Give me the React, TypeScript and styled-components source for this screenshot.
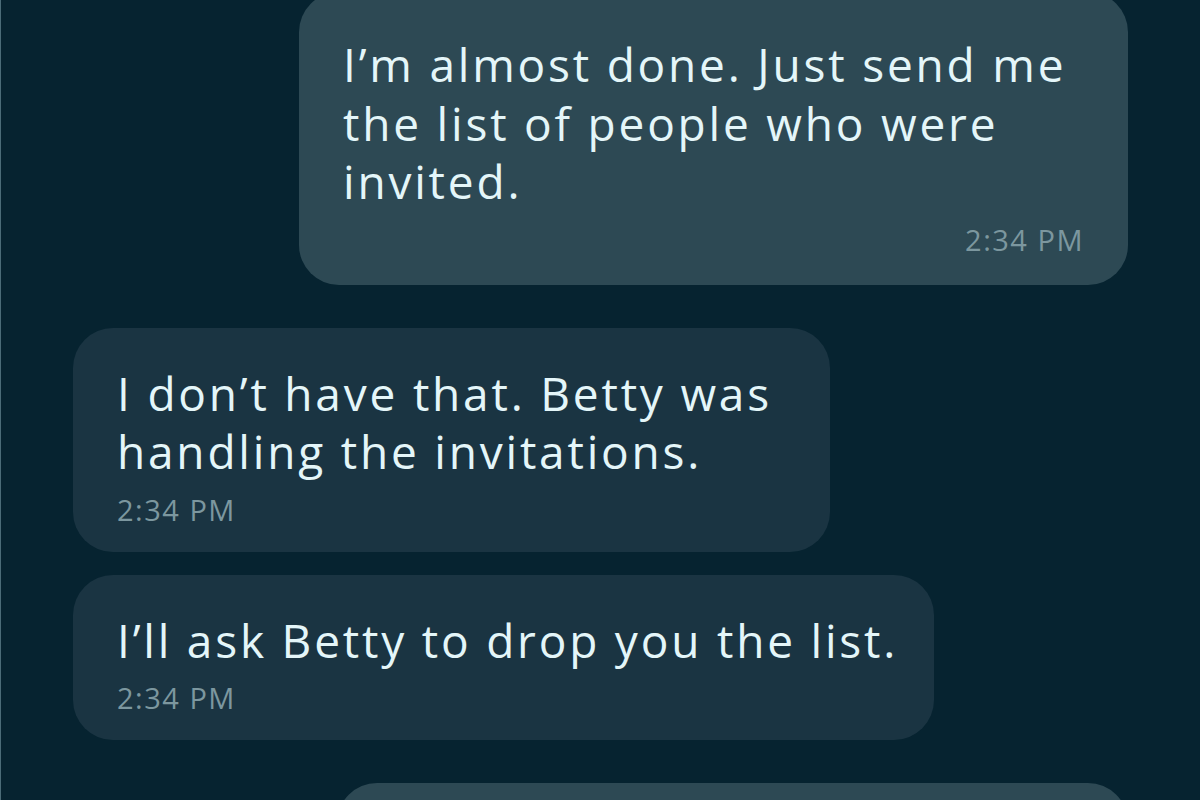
import styled, { createGlobalStyle } from "styled-components";

const GlobalStyle = createGlobalStyle`
  html, body {
    margin: 0;
    padding: 0;
    background: #062330;
  }
  body {
    font-family: "Open Sans", Lato, "Noto Sans", sans-serif;
  }
`;

const Screen = styled.div`
  width: 1200px;
  height: 800px;
  overflow: hidden;
  background: #062330;
  border-left: 1px solid #4b6c78;
  box-sizing: border-box;
`;

const Thread = styled.div`
  display: flex;
  flex-direction: column;
  padding: 0 72px 0 72px;
  margin-top: -8px;
`;

const Bubble = styled.div<{ $sent: boolean; $gap: number; $width: number }>`
  align-self: ${({ $sent }) => ($sent ? "flex-end" : "flex-start")};
  margin-top: ${({ $gap }) => $gap}px;
  width: ${({ $width }) => $width}px;
  box-sizing: border-box;
  background: ${({ $sent }) => ($sent ? "#2d4954" : "#1a3442")};
  border-radius: 40px;
  padding: ${({ $sent }) => ($sent ? "43px 44px 28px" : "36px 44px 25px")};
  display: flex;
  flex-direction: column;
`;

const Body = styled.div`
  font-size: 46px;
  line-height: 58.5px;
  color: #e4f6f9;
  white-space: nowrap;
  letter-spacing: 2.8px;
`;

const Time = styled.div<{ $sent: boolean }>`
  margin-top: 12px;
  font-size: 29px;
  line-height: 34px;
  color: #7c979f;
  letter-spacing: 1.5px;
  text-align: ${({ $sent }) => ($sent ? "right" : "left")};
`;

interface Message {
  sent: boolean;
  lines: string[];
  time: string;
  width: number;
}

const messages: Message[] = [
  {
    sent: true,
    lines: ["I’m almost done. Just send me", "the list of people who were", "invited."],
    time: "2:34 PM",
    width: 829,
  },
  {
    sent: false,
    lines: ["I don’t have that. Betty was", "handling the invitations."],
    time: "2:34 PM",
    width: 757,
  },
  {
    sent: false,
    lines: ["I’ll ask Betty to drop you the list."],
    time: "2:34 PM",
    width: 861,
  },
  {
    sent: true,
    lines: ["Okay, thanks. I’ll wait for her."],
    time: "2:35 PM",
    width: 791,
  },
];

export default function App() {
  return (
    <>
      <GlobalStyle />
      <Screen>
        <Thread>
          {messages.map((m, i) => {
            const prev = messages[i - 1];
            const gap = !prev ? 0 : prev.sent === m.sent ? 23 : 43;
            return (
              <Bubble key={i} $sent={m.sent} $gap={gap} $width={m.width}>
                <Body>
                  {m.lines.map((l, j) => (
                    <div key={j}>{l}</div>
                  ))}
                </Body>
                <Time $sent={m.sent}>{m.time}</Time>
              </Bubble>
            );
          })}
        </Thread>
      </Screen>
    </>
  );
}
